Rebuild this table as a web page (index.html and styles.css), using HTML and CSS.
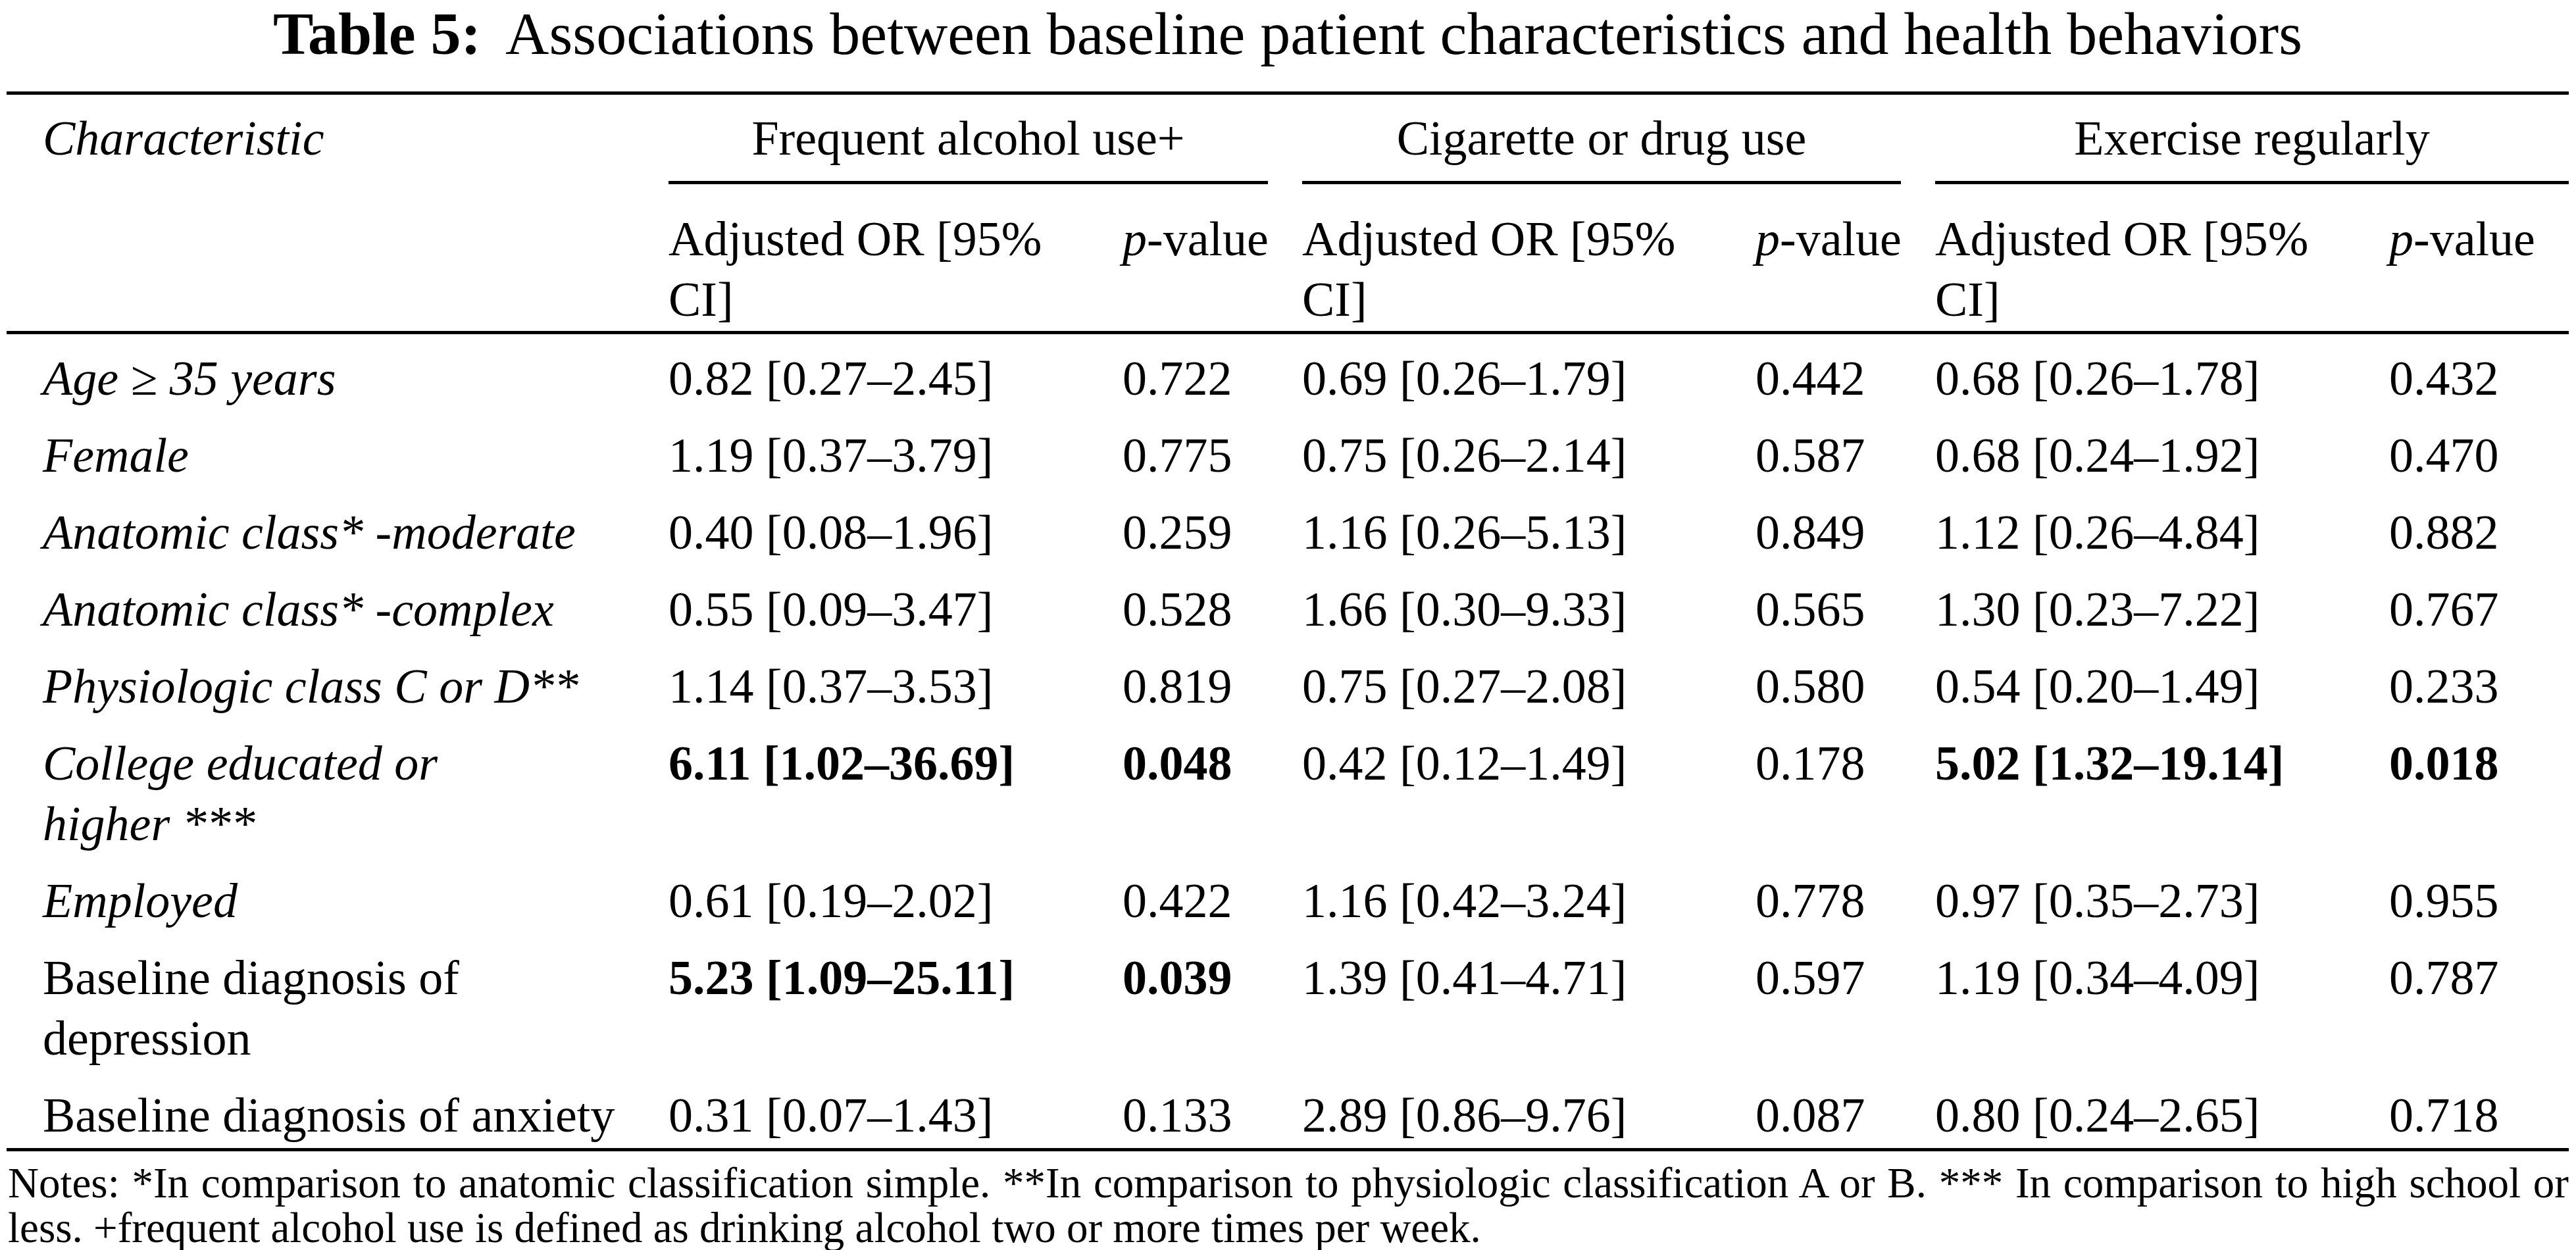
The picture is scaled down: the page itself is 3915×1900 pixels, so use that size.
FILE: index.html
```html
<!DOCTYPE html>
<html lang="en">
<head>
<meta charset="utf-8">
<title>Table 5</title>
<link rel="stylesheet" href="styles.css">
</head>
<body>
<div class="page">
  <h1 class="title"><b class="title-num">Table 5:</b>Associations between baseline patient characteristics and health behaviors</h1>

  <div class="tbl">
    <div class="rule"></div>

    <div class="row head1">
      <div class="cell lead it">Characteristic</div>
      <div class="grp"><div class="grp-label trim">Frequent alcohol use+</div></div>
      <div class="grp"><div class="grp-label trim">Cigarette or drug use</div></div>
      <div class="grp"><div class="grp-label">Exercise regularly</div></div>
    </div>

    <div class="row head2">
      <div class="cell lead"></div>
      <div class="cell">Adjusted OR [95%<br>CI]</div>
      <div class="cell"><i>p</i>-value</div>
      <div class="cell">Adjusted OR [95%<br>CI]</div>
      <div class="cell"><i>p</i>-value</div>
      <div class="cell">Adjusted OR [95%<br>CI]</div>
      <div class="cell"><i>p</i>-value</div>
    </div>

    <div class="rule"></div>

    <div class="row data">
      <div class="cell lead it">Age ≥ 35 years</div>
      <div class="cell">0.82 [0.27–2.45]</div><div class="cell">0.722</div>
      <div class="cell">0.69 [0.26–1.79]</div><div class="cell">0.442</div>
      <div class="cell">0.68 [0.26–1.78]</div><div class="cell">0.432</div>
    </div>
    <div class="row data">
      <div class="cell lead it">Female</div>
      <div class="cell">1.19 [0.37–3.79]</div><div class="cell">0.775</div>
      <div class="cell">0.75 [0.26–2.14]</div><div class="cell">0.587</div>
      <div class="cell">0.68 [0.24–1.92]</div><div class="cell">0.470</div>
    </div>
    <div class="row data">
      <div class="cell lead it">Anatomic class* -moderate</div>
      <div class="cell">0.40 [0.08–1.96]</div><div class="cell">0.259</div>
      <div class="cell">1.16 [0.26–5.13]</div><div class="cell">0.849</div>
      <div class="cell">1.12 [0.26–4.84]</div><div class="cell">0.882</div>
    </div>
    <div class="row data">
      <div class="cell lead it">Anatomic class* -complex</div>
      <div class="cell">0.55 [0.09–3.47]</div><div class="cell">0.528</div>
      <div class="cell">1.66 [0.30–9.33]</div><div class="cell">0.565</div>
      <div class="cell">1.30 [0.23–7.22]</div><div class="cell">0.767</div>
    </div>
    <div class="row data">
      <div class="cell lead it">Physiologic class C or D**</div>
      <div class="cell">1.14 [0.37–3.53]</div><div class="cell">0.819</div>
      <div class="cell">0.75 [0.27–2.08]</div><div class="cell">0.580</div>
      <div class="cell">0.54 [0.20–1.49]</div><div class="cell">0.233</div>
    </div>
    <div class="row data">
      <div class="cell lead it">College educated or<br>higher ***</div>
      <div class="cell strong">6.11 [1.02–36.69]</div><div class="cell strong">0.048</div>
      <div class="cell">0.42 [0.12–1.49]</div><div class="cell">0.178</div>
      <div class="cell strong">5.02 [1.32–19.14]</div><div class="cell strong">0.018</div>
    </div>
    <div class="row data">
      <div class="cell lead it">Employed</div>
      <div class="cell">0.61 [0.19–2.02]</div><div class="cell">0.422</div>
      <div class="cell">1.16 [0.42–3.24]</div><div class="cell">0.778</div>
      <div class="cell">0.97 [0.35–2.73]</div><div class="cell">0.955</div>
    </div>
    <div class="row data">
      <div class="cell lead">Baseline diagnosis of<br>depression</div>
      <div class="cell strong">5.23 [1.09–25.11]</div><div class="cell strong">0.039</div>
      <div class="cell">1.39 [0.41–4.71]</div><div class="cell">0.597</div>
      <div class="cell">1.19 [0.34–4.09]</div><div class="cell">0.787</div>
    </div>
    <div class="row data">
      <div class="cell lead">Baseline diagnosis of anxiety</div>
      <div class="cell">0.31 [0.07–1.43]</div><div class="cell">0.133</div>
      <div class="cell">2.89 [0.86–9.76]</div><div class="cell">0.087</div>
      <div class="cell">0.80 [0.24–2.65]</div><div class="cell">0.718</div>
    </div>

    <div class="rule"></div>
  </div>

  <p class="notes">Notes: *In comparison to anatomic classification simple. **In comparison to physiologic classification A or B. *** In comparison to high school or less. +frequent alcohol use is defined as drinking alcohol two or more times per week.</p>
</div>
</body>
</html>
```

FILE: styles.css
```css
html, body {
  margin: 0;
  padding: 0;
  background: #ffffff;
  color: #000000;
}

body {
  font-family: "Liberation Serif", "Times New Roman", serif;
}

.page {
  width: 3894px;
  margin-left: 10px;
}

.title {
  margin: 0;
  font-size: 92px;
  line-height: 102px;
  font-weight: normal;
  text-align: center;
  white-space: nowrap;
}

.title-num {
  font-weight: bold;
  margin-right: 37px;
}

.tbl {
  margin-top: 37px;
  font-size: 74px;
  line-height: 92px;
}

.rule {
  height: 5px;
  background: #000000;
}

.row {
  display: grid;
  grid-template-columns: 1006px 690px 273px 689px 273px 690px 273px;
}

.cell {
  white-space: nowrap;
}

.lead {
  padding-left: 55px;
}

.it {
  font-style: italic;
}

.strong {
  font-weight: bold;
}

.head1 .cell {
  padding-top: 20px;
}

.grp {
  grid-column: span 2;
}

.grp-label {
  padding-top: 20px;
  padding-bottom: 19px;
  border-bottom: 5px solid #000000;
  text-align: center;
  white-space: nowrap;
}

.grp-label.trim {
  margin-right: 52px;
}

.head2 .cell {
  padding-top: 37px;
  padding-bottom: 2px;
}

.data .cell {
  padding-top: 21px;
  padding-bottom: 4px;
}

.notes {
  margin: 14px 0 0 0;
  padding-left: 2px;
  font-size: 65px;
  line-height: 68px;
  text-align: justify;
}
```
